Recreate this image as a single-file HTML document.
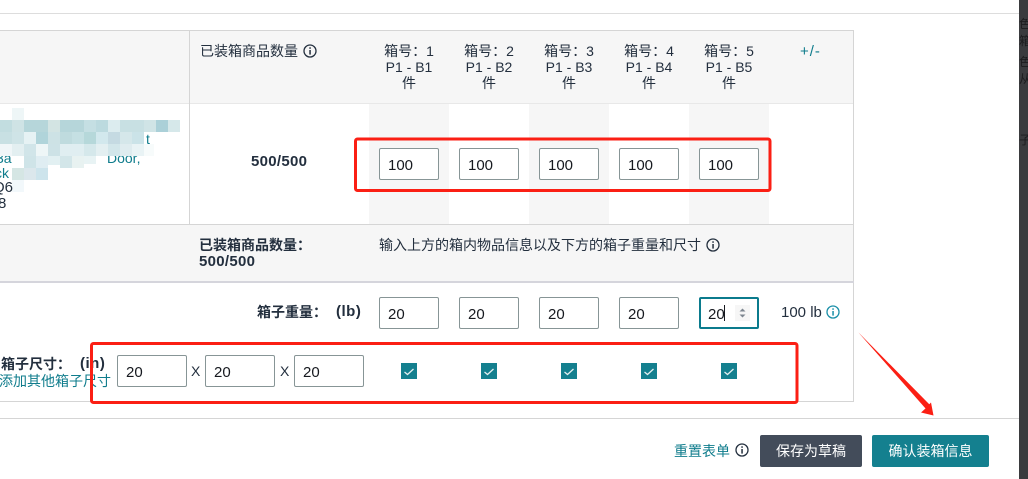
<!DOCTYPE html>
<html><head><meta charset="utf-8">
<style>
html,body{margin:0;padding:0;background:#fff}
#p{position:relative;width:1028px;height:479px;overflow:hidden;background:#fff;font-family:"Liberation Sans","Noto Sans CJK SC",sans-serif;font-size:14px;color:#16191f}
#p div{position:absolute;box-sizing:border-box}
.t{white-space:nowrap;line-height:16px}
.c{text-align:center;width:80px;line-height:16px;white-space:nowrap;font-size:14px;color:#232f3e}
.in{height:32px;border:1px solid #879596;border-radius:2px;background:#fff;font-size:15px;line-height:33px;padding-left:8px;color:#16191f}
.cb{width:16px;height:16px;background:#14808f;top:363px}
.b{font-weight:bold}
svg{position:absolute}
</style></head><body><div id="p">
<div style="left:0;top:13px;width:1019px;height:1px;background:#ddd"></div>
<div style="left:1019px;top:0;width:9px;height:479px;background:#3a3b3e"></div>
<div class="t" style="left:1019px;top:16px;font-size:12px;color:#1c1c1e">色</div>
<div class="t" style="left:1019px;top:33px;font-size:12px;color:#1c1c1e">箱</div>
<div class="t" style="left:1019px;top:54px;font-size:12px;color:#1c1c1e">色</div>
<div class="t" style="left:1019px;top:71px;font-size:12px;color:#1c1c1e">从</div>
<div class="t" style="left:1019px;top:132px;font-size:12px;color:#1c1c1e">子</div>

<!-- table -->
<div style="left:0;top:31px;width:853px;height:72px;background:#f6f6f6"></div>
<div style="left:0;top:30px;width:854px;height:1px;background:#d5d5d5"></div>
<div style="left:0;top:103px;width:853px;height:1px;background:#e8e8e8"></div>
<div style="left:853px;top:30px;width:1px;height:372px;background:#d5d5d5"></div>
<div style="left:189px;top:30px;width:1px;height:194px;background:#d5d5d5"></div>
<div style="left:369px;top:104px;width:80px;height:120px;background:#f6f6f6"></div>
<div style="left:529px;top:104px;width:80px;height:120px;background:#f6f6f6"></div>
<div style="left:689px;top:104px;width:80px;height:120px;background:#f6f6f6"></div>
<div style="left:0;top:224px;width:853px;height:1px;background:#d5d5d5"></div>
<div style="left:0;top:225px;width:853px;height:56px;background:#f6f6f6"></div>
<div style="left:0;top:281px;width:854px;height:2px;background:#d5d5dc"></div>
<div style="left:0;top:401px;width:854px;height:1px;background:#d5d5d5"></div>
<div style="left:0;top:418px;width:1019px;height:1px;background:#d5d5d5"></div>

<!-- header -->
<div class="t" style="left:200px;top:43px;color:#232f3e">已装箱商品数量</div>
<svg style="left:303px;top:44px" width="14" height="14" viewBox="0 0 14 14"><circle cx="7" cy="7" r="6" fill="none" stroke="#232f3e" stroke-width="1.300"/><rect x="6.300" y="6" width="1.500" height="4.600" fill="#232f3e"/><rect x="6.300" y="3.300" width="1.500" height="1.500" fill="#232f3e"/></svg>
<div class="c" style="left:369px;top:43px">箱号：1<br>P1 - B1<br>件</div>
<div class="c" style="left:449px;top:43px">箱号：2<br>P1 - B2<br>件</div>
<div class="c" style="left:529px;top:43px">箱号：3<br>P1 - B3<br>件</div>
<div class="c" style="left:609px;top:43px">箱号：4<br>P1 - B4<br>件</div>
<div class="c" style="left:689px;top:43px">箱号：5<br>P1 - B5<br>件</div>
<div class="t" style="left:800px;top:44px;color:#0f7c8c;font-size:15px;letter-spacing:1px">+/-</div>

<!-- product text -->
<div class="t" style="left:146px;top:131px;color:#0f7c8c">t</div>
<div class="t" style="left:-5px;top:135px;color:#0f7c8c">ck</div>
<div class="t" style="left:107px;top:150px;color:#0f7c8c;font-size:14px">Door,</div>
<div class="t" style="left:-4px;top:150px;color:#0f7c8c;font-size:14px">3a</div>
<div class="t" style="left:30px;top:150px;color:#0f7c8c;font-size:14px">3</div>
<div class="t" style="left:60px;top:150px;color:#0f7c8c;font-size:14px">V.</div>
<svg style="left:0;top:105px" width="190" height="90" viewBox="0 0 190 90">
<g shape-rendering="crispEdges">
<rect x="12" y="3" width="12" height="12" fill="#eef6f7"/>
<rect x="0" y="15" width="12" height="12" fill="#c2dde0"/><rect x="12" y="15" width="12" height="12" fill="#cfe3e5"/><rect x="24" y="15" width="24" height="12" fill="#b6d6da"/><rect x="48" y="15" width="12" height="12" fill="#d3e4e3"/><rect x="60" y="15" width="24" height="12" fill="#b6d6da"/><rect x="84" y="15" width="12" height="12" fill="#c5dfe3"/><rect x="96" y="15" width="12" height="12" fill="#bcdadf"/><rect x="108" y="15" width="12" height="12" fill="#dcecef"/><rect x="120" y="15" width="24" height="12" fill="#c8e0e3"/><rect x="144" y="15" width="12" height="12" fill="#d0e4e6"/><rect x="156" y="15" width="12" height="12" fill="#abd0d8"/><rect x="168" y="15" width="12" height="12" fill="#d6e8ea"/>
<rect x="0" y="27" width="12" height="12" fill="#c8e0e3"/><rect x="12" y="27" width="12" height="12" fill="#cfe4e7"/><rect x="24" y="27" width="12" height="12" fill="#e6f2f4"/><rect x="36" y="27" width="12" height="12" fill="#b0d4da"/><rect x="48" y="27" width="12" height="12" fill="#cde2e5"/><rect x="60" y="27" width="12" height="12" fill="#bfdbde"/><rect x="72" y="27" width="12" height="12" fill="#c5e0e3"/><rect x="84" y="27" width="12" height="12" fill="#b6d8da"/><rect x="96" y="27" width="12" height="12" fill="#d2e8ed"/><rect x="108" y="27" width="12" height="12" fill="#c5dae2"/><rect x="120" y="27" width="12" height="12" fill="#d5e7ea"/><rect x="132" y="27" width="12" height="12" fill="#cbe3e8"/>
<rect x="0" y="39" width="12" height="12" fill="#f0f6f8"/><rect x="12" y="39" width="12" height="12" fill="#e3eff1"/><rect x="24" y="39" width="12" height="12" fill="#d1e5e9"/><rect x="36" y="39" width="12" height="12" fill="#eef6f7"/><rect x="48" y="39" width="12" height="12" fill="#cde2e6"/><rect x="60" y="39" width="24" height="12" fill="#e0eef1"/><rect x="84" y="39" width="12" height="12" fill="#d5e8eb"/><rect x="96" y="39" width="12" height="12" fill="#e3eff1"/><rect x="108" y="39" width="12" height="12" fill="#d2e6ea"/><rect x="120" y="39" width="12" height="12" fill="#dfecef"/><rect x="132" y="39" width="12" height="12" fill="#e9f3f5"/><rect x="144" y="39" width="10" height="12" fill="#f7fbfb"/>
<rect x="24" y="51" width="12" height="12" fill="#cfe4e8"/><rect x="36" y="51" width="12" height="12" fill="#dfedf2"/><rect x="48" y="51" width="12" height="9" fill="#e2f0f2"/><rect x="60" y="51" width="12" height="12" fill="#d3e6e9"/><rect x="72" y="51" width="12" height="12" fill="#e8f2f1"/><rect x="84" y="51" width="12" height="8" fill="#e8f3f4"/>
<rect x="12" y="63" width="12" height="12" fill="#d5e6e4"/><rect x="24" y="63" width="12" height="12" fill="#dbe7ec"/><rect x="36" y="63" width="12" height="12" fill="#cde4ec"/>
<rect x="12" y="75" width="12" height="12" fill="#f2f8fb"/>
</g></svg>
<div class="t" style="left:-5px;top:165px;color:#0f7c8c;font-size:14px">ck</div>
<div class="t" style="left:-7px;top:180px;font-size:15px;color:#232f3e">Q6</div>
<div class="t" style="left:-2px;top:196px;font-size:15px;color:#232f3e">8</div>

<div class="b t" style="left:251px;top:154px;font-size:15px;letter-spacing:.3px;color:#232f3e">500/500</div>

<!-- qty inputs -->
<div class="in" style="left:379px;top:148px;width:60px">100</div>
<div class="in" style="left:459px;top:148px;width:60px">100</div>
<div class="in" style="left:539px;top:148px;width:60px">100</div>
<div class="in" style="left:619px;top:148px;width:60px">100</div>
<div class="in" style="left:699px;top:148px;width:60px">100</div>

<!-- summary -->
<div class="b t" style="left:199px;top:237px;color:#232f3e">已装箱商品数量：</div>
<div class="b t" style="left:199px;top:254px;font-size:15px;letter-spacing:.3px;color:#232f3e">500/500</div>
<div class="t" style="left:379px;top:237px;color:#232f3e">输入上方的箱内物品信息以及下方的箱子重量和尺寸</div>
<svg style="left:706px;top:238px" width="14" height="14" viewBox="0 0 14 14"><circle cx="7" cy="7" r="6" fill="none" stroke="#232f3e" stroke-width="1.300"/><rect x="6.300" y="6" width="1.500" height="4.600" fill="#232f3e"/><rect x="6.300" y="3.300" width="1.500" height="1.500" fill="#232f3e"/></svg>

<!-- weight -->
<div class="b t" style="left:257px;top:304px;color:#232f3e">箱子重量：</div>
<div class="b t" style="left:336px;top:304px;font-size:15px;letter-spacing:.5px;color:#232f3e">(lb)</div>
<div class="in" style="left:379px;top:297px;width:60px">20</div>
<div class="in" style="left:459px;top:297px;width:60px">20</div>
<div class="in" style="left:539px;top:297px;width:60px">20</div>
<div class="in" style="left:619px;top:297px;width:60px">20</div>
<div class="in" style="left:699px;top:297px;width:60px;border:2px solid #0b7b8d;line-height:31px;padding-left:7px">20</div>
<div style="left:724px;top:305px;width:1px;height:16px;background:#16191f"></div>
<div style="left:735px;top:305px;width:15px;height:16px;background:#f6f6f6"></div>
<svg style="left:735px;top:305px" width="15" height="16" viewBox="0 0 15 16"><path d="M7.500 3.500L10.500 6.500H4.500Z" fill="#7d8690"/><path d="M7.500 12.500L10.500 9.500H4.500Z" fill="#7d8690"/></svg>
<div class="t" style="left:781px;top:305px;font-size:15px;color:#232f3e">100 lb</div>
<svg style="left:826px;top:305px" width="14" height="14" viewBox="0 0 14 14"><circle cx="7" cy="7" r="6" fill="none" stroke="#1a8fa8" stroke-width="1.300"/><rect x="6.300" y="6" width="1.500" height="4.600" fill="#1a8fa8"/><rect x="6.300" y="3.300" width="1.500" height="1.500" fill="#1a8fa8"/></svg>

<!-- dimension -->
<div class="b t" style="left:1px;top:356px;color:#232f3e">箱子尺寸：</div>
<div class="b t" style="left:80px;top:356px;font-size:15px;letter-spacing:.5px;color:#232f3e">(in)</div>
<div class="t" style="left:-1px;top:373px;color:#0f7c8c">添加其他箱子尺寸</div>
<div class="in" style="left:117px;top:355px;width:70px">20</div>
<div class="t" style="left:191px;top:363px;font-size:14px;color:#232f3e">X</div>
<div class="in" style="left:205px;top:355px;width:70px">20</div>
<div class="t" style="left:280px;top:363px;font-size:14px;color:#232f3e">X</div>
<div class="in" style="left:294px;top:355px;width:70px">20</div>
<div class="cb" style="left:401px"></div><div class="cb" style="left:481px"></div><div class="cb" style="left:561px"></div><div class="cb" style="left:641px"></div><div class="cb" style="left:721px"></div>
<svg style="left:0;top:0" width="1028" height="479" viewBox="0 0 1028 479">
<g fill="none" stroke="#e4eff1" stroke-width="1.300"><path d="M404.500 372l3 2.500l6-5.500"/><path d="M484.500 372l3 2.500l6-5.500"/><path d="M564.500 372l3 2.500l6-5.500"/><path d="M644.500 372l3 2.500l6-5.500"/><path d="M724.500 372l3 2.500l6-5.500"/></g>
<rect x="355.500" y="139" width="414.500" height="51.500" rx="2" fill="none" stroke="#fb1f14" stroke-width="3"/>
<rect x="91.500" y="343.500" width="705.500" height="59" rx="2" fill="none" stroke="#fb1f14" stroke-width="3"/>
<path d="M858.500 332.500L926 408L921 412.500L933.500 415.500L931 402.500L927 406.500Z" fill="#fb1f14"/>
<path d="M858.500 332.500L929.500 404.500L926 409Z" fill="#fb1f14"/>
</svg>

<!-- footer -->
<div class="t" style="left:674px;top:443px;color:#0f7c8c">重置表单</div>
<svg style="left:735px;top:443px" width="14" height="14" viewBox="0 0 14 14"><circle cx="7" cy="7" r="6" fill="none" stroke="#232f3e" stroke-width="1.300"/><rect x="6.300" y="6" width="1.500" height="4.600" fill="#232f3e"/><rect x="6.300" y="3.300" width="1.500" height="1.500" fill="#232f3e"/></svg>
<div class="t" style="left:760px;top:435px;width:102px;height:32px;background:#434c5a;border-radius:2px;color:#fff;text-align:center;line-height:32px">保存为草稿</div>
<div class="t" style="left:872px;top:435px;width:117px;height:32px;background:#14808f;border-radius:2px;color:#fff;text-align:center;line-height:32px">确认装箱信息</div>
</div></body></html>
